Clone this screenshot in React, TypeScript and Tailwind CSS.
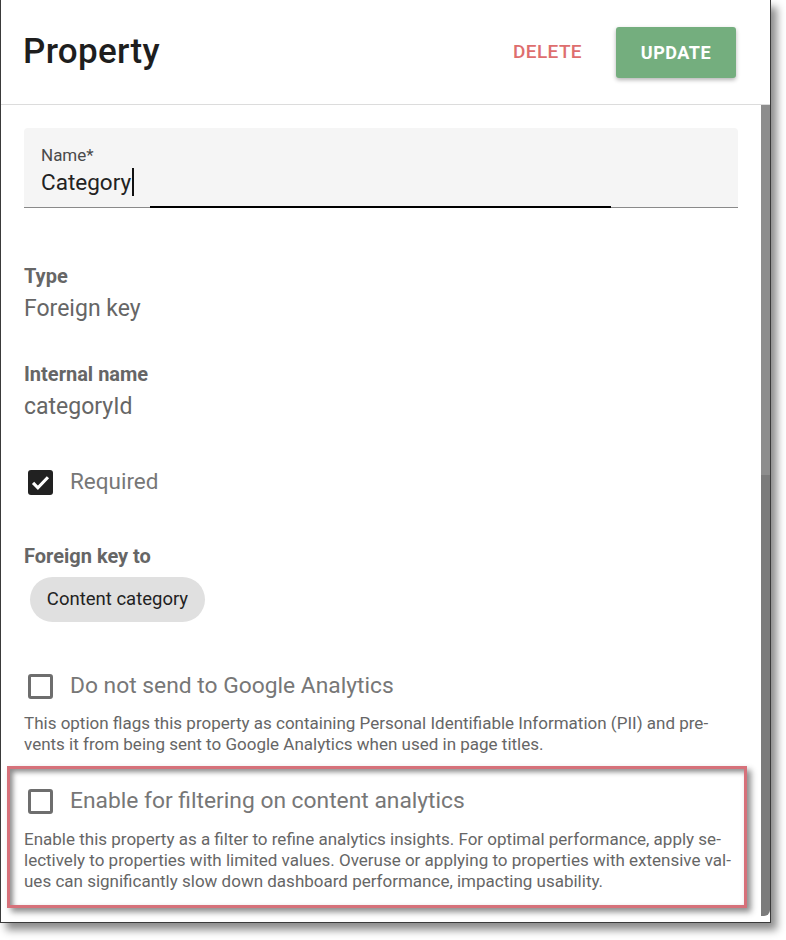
import React from "react";

function CheckBox({ checked }: { checked?: boolean }) {
  if (checked) {
    return (
      <div className="ml-1 w-[25px] h-[25px] rounded-[3px] bg-[#212121] flex items-center justify-center shrink-0">
        <svg width="21" height="21" viewBox="0 0 24 24">
          <path d="M3.5 12.5l5.5 5.5 11.5-12" fill="none" stroke="#fff" strokeWidth="3.6" />
        </svg>
      </div>
    );
  }
  return <div className="ml-1 w-[25px] h-[25px] rounded-[3px] border-[3px] border-[#6e6e6e] shrink-0" />;
}

export default function App() {
  return (
    <div
      className="w-[786px] h-[940px] bg-white relative overflow-hidden"
      style={{ fontFamily: "Roboto, 'Noto Sans', sans-serif" }}
    >
      <div className="w-[771px] h-[923px] bg-white border-l border-r border-b border-[#3a3a3a] shadow-[6px_7px_8px_rgba(0,0,0,0.45)] flex flex-col">
        {/* Header */}
        <div className="h-[105px] shrink-0 border-b border-[#dcdcdc] flex items-center justify-between pl-[22px] pr-[34px]">
          <div className="text-[35px] font-medium text-[#1e1e1e] tracking-[0.3px] mt-[1px]">Property</div>
          <div className="flex items-center">
            <div className="text-[19px] font-medium text-[#de6e6e] tracking-[0.4px] mr-[34px]">DELETE</div>
            <div className="w-[120px] h-[51px] rounded-[3px] bg-[#74ae7e] text-white text-[18px] font-bold tracking-[0.5px] flex items-center justify-center shadow-[0_2px_4px_rgba(0,0,0,0.3)]">
              UPDATE
            </div>
          </div>
        </div>
        {/* Body */}
        <div className="flex-1 flex min-h-0">
          <div className="flex-1 pl-[23px] pr-[23px] pt-[23px]">
            {/* Name field */}
            <div className="h-[80px] bg-[#f5f5f5] rounded-t-[4px] border-b border-[#8a8a8a] relative pl-[17px] pt-[17px]">
              <div className="text-[17px] leading-[20px] text-[#4a4a4a]">Name*</div>
              <div className="text-[22.5px] leading-[30px] text-[#222] mt-[2px] flex items-center">
                <span>Category</span>
                <span className="w-[2px] h-[28px] bg-[#111] ml-[1px]" />
              </div>
              <div className="absolute left-[126px] bottom-[-1px] w-[461px] h-[2px] bg-black" />
            </div>

            <div className="mt-[56px] text-[20px] leading-[24px] font-bold text-[#666]">Type</div>
            <div className="mt-[6px] text-[23px] leading-[30px] text-[#666]">Foreign key</div>

            <div className="mt-[38px] text-[20px] leading-[24px] font-bold text-[#666]">Internal name</div>
            <div className="mt-[6px] text-[23px] leading-[30px] text-[#666]">categoryId</div>

            <div className="mt-[45px] h-[30px] flex items-center">
              <CheckBox checked />
              <span className="ml-[17px] text-[22.5px] text-[#777]">Required</span>
            </div>

            <div className="mt-[47px] text-[20px] leading-[24px] font-bold text-[#666]">Foreign key to</div>
            <div className="mt-[9px] ml-[6px] w-[175px] h-[45px] rounded-full bg-[#e0e0e0] flex items-center justify-center text-[18.5px] text-[#222]">
              Content category
            </div>

            <div className="mt-[49px] h-[30px] flex items-center">
              <CheckBox />
              <span className="ml-[17px] text-[22.8px] text-[#777]">Do not send to Google Analytics</span>
            </div>
            <div className="mt-[12px] text-[17px] leading-[21px] text-[#666] whitespace-nowrap">
              This option flags this property as containing Personal Identifiable Information (PII) and pre-
              <br />
              vents it from being sent to Google Analytics when used in page titles.
            </div>

            <div className="mt-[11px] ml-[-17px] mr-[-9px] h-[142px] border-[3px] border-[#d6717a] shadow-[inset_3px_3px_5px_rgba(0,0,0,0.45),4px_4px_6px_rgba(0,0,0,0.45)] pl-[14px] pt-[17px]">
              <div className="h-[30px] flex items-center">
                <CheckBox />
                <span className="ml-[17px] text-[22.8px] text-[#777]">Enable for filtering on content analytics</span>
              </div>
              <div className="mt-[13px] text-[17px] leading-[21px] text-[#666] whitespace-nowrap">
                Enable this property as a filter to refine analytics insights. For optimal performance, apply se-
                <br />
                lectively to properties with limited values. Overuse or applying to properties with extensive val-
                <br />
                ues can significantly slow down dashboard performance, impacting usability.
              </div>
            </div>
          </div>
          {/* Scrollbar */}
          <div className="w-[9px] shrink-0 flex flex-col pb-[6px]">
            <div className="h-[370px] bg-[#8d8d8d]" />
            <div className="flex-1 bg-[#7b7b7b] rounded-br-[6px]" />
          </div>
        </div>
      </div>
    </div>
  );
}
